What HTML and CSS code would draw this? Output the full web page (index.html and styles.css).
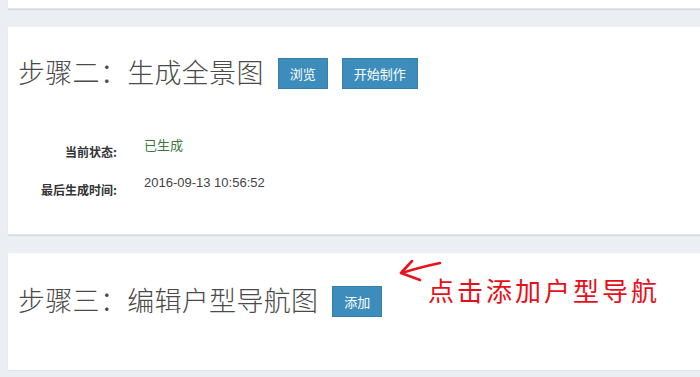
FILE: index.html
```html
<!DOCTYPE html>
<html lang="zh-CN">
<head>
<meta charset="utf-8">
<title>步骤</title>
<link rel="stylesheet" href="styles.css">
</head>
<body>
<div class="page">
  <section class="card card-top"></section>

  <section class="card card-step2">
    <div class="step-head">
      <h2 class="step-title">步骤二：生成全景图</h2>
      <button class="btn">浏览</button>
      <button class="btn">开始制作</button>
    </div>
    <div class="info">
      <div class="info-row">
        <span class="info-label">当前状态:</span>
        <span class="info-value ok">已生成</span>
      </div>
      <div class="info-row">
        <span class="info-label">最后生成时间:</span>
        <span class="info-value">2016-09-13 10:56:52</span>
      </div>
    </div>
  </section>

  <section class="card card-step3">
    <div class="step-head">
      <h2 class="step-title">步骤三：编辑户型导航图</h2>
      <button class="btn">添加</button>
    </div>
    <svg class="note-arrow" width="44" height="26" viewBox="0 0 44 26">
      <path d="M4 13 C 16 9, 28 6, 42 3" fill="none" stroke="#e8141b" stroke-width="2.6" stroke-linecap="round"/>
      <path d="M14 1 L 3 13 L 22 20" fill="none" stroke="#e8141b" stroke-width="2.6" stroke-linecap="round" stroke-linejoin="round"/>
    </svg>
    <div class="note-text">点击添加户型导航</div>
  </section>
</div>
</body>
</html>
```

FILE: styles.css
```css
html, body {
  margin: 0;
  padding: 0;
  background: #ebeff3;
}

.page {
  display: flex;
  flex-direction: column;
  gap: 18px;
  padding-left: 8px;
  font-family: "Liberation Sans", Arial, "Noto Sans CJK SC", sans-serif;
}

.card {
  background: #ffffff;
  box-shadow: 0 1px 1px rgba(0, 0, 0, 0.08);
  border-bottom: 1px solid #e1e5ea;
  box-sizing: border-box;
  position: relative;
}

.card-top {
  height: 9px;
}

.card-step2 {
  height: 208px;
  padding: 31px 10px 0 10px;
}

.card-step3 {
  height: 118px;
  padding: 33px 10px 0 10px;
}

.step-head {
  display: flex;
  align-items: center;
  height: 31px;
}

.step-title {
  margin: 0 14px 0 0;
  font-family: "Noto Sans CJK SC", sans-serif;
  font-weight: 300;
  font-size: 27px;
  letter-spacing: 0.3px;
  line-height: 31px;
  color: #4a4a4a;
  position: relative;
  top: -2px;
}

.btn {
  height: 31px;
  padding: 0 11px;
  margin-right: 14px;
  border: 1px solid #367fa9;
  background: #3c8dbc;
  color: #ffffff;
  font-family: "Noto Sans CJK SC", sans-serif;
  font-size: 13px;
  line-height: 29px;
  border-radius: 0;
}

.info {
  display: flex;
  flex-direction: column;
  margin-top: 46px;
}

.info-row {
  display: flex;
  height: 38px;
}

.info-label {
  width: 99px;
  text-align: right;
  padding-top: 7px;
  font-family: "Noto Sans CJK SC", sans-serif;
  font-weight: 700;
  font-size: 12px;
  line-height: 20px;
  color: #333333;
}

.info-value {
  margin-left: 27px;
  font-size: 13px;
  line-height: 20px;
  color: #444444;
}

.info-value.ok {
  font-family: "Noto Sans CJK SC", sans-serif;
  color: #3c763d;
}

.note-arrow {
  position: absolute;
  left: 390px;
  top: 7px;
}

.note-text {
  position: absolute;
  left: 420px;
  top: 19px;
  font-family: "Noto Sans CJK SC", sans-serif;
  font-weight: 400;
  font-size: 26px;
  line-height: 36px;
  letter-spacing: 3px;
  color: #e60f19;
}
```
